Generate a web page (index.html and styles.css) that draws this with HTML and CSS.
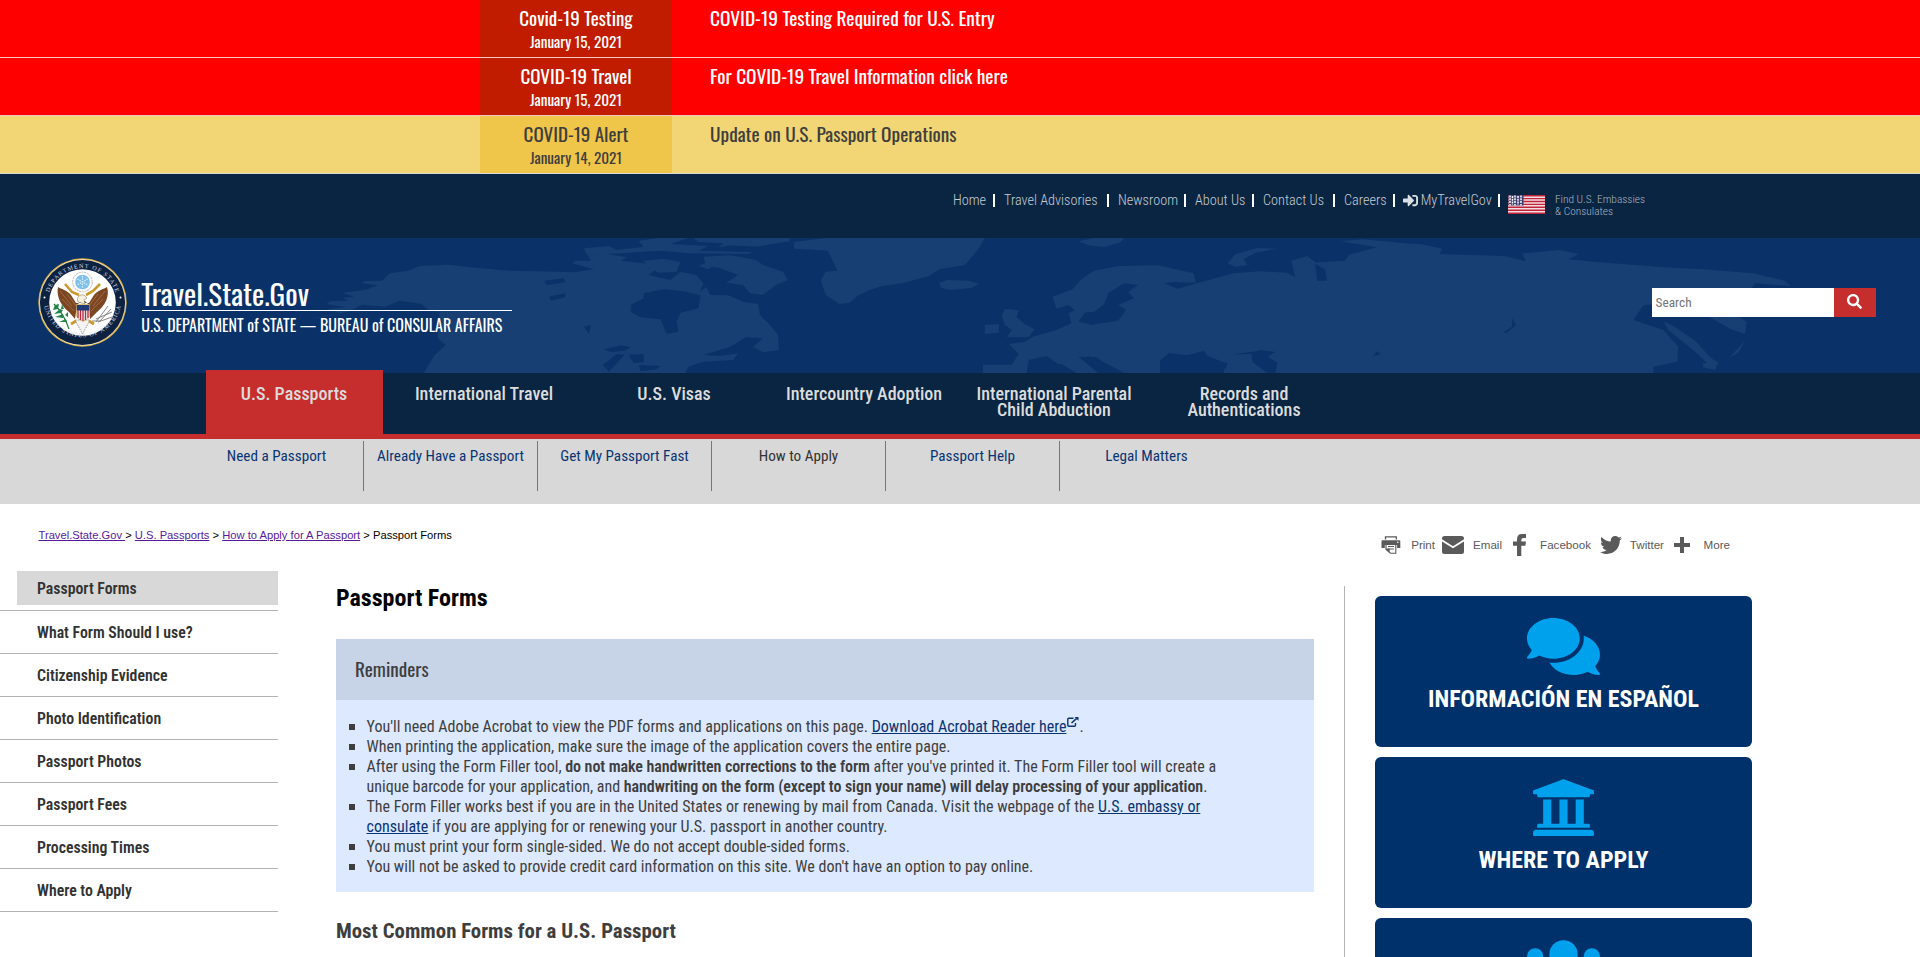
FILE: index.html
```html
<!DOCTYPE html>
<html lang="en">
<head>
<meta charset="utf-8">
<title>Passport Forms</title>
<link rel="stylesheet" href="styles.css">
</head>
<body>
<section class="alerts">
  <div class="alert alert-red">
    <div class="alert-tag"><div class="alert-name">Covid-19 Testing</div><div class="alert-date">January 15, 2021</div></div>
    <a class="alert-title">COVID-19 Testing Required for U.S. Entry</a>
  </div>
  <div class="alert alert-red">
    <div class="alert-tag"><div class="alert-name">COVID-19 Travel</div><div class="alert-date">January 15, 2021</div></div>
    <a class="alert-title">For COVID-19 Travel Information click here</a>
  </div>
  <div class="alert alert-yellow">
    <div class="alert-tag"><div class="alert-name">COVID-19 Alert</div><div class="alert-date">January 14, 2021</div></div>
    <a class="alert-title">Update on U.S. Passport Operations</a>
  </div>
</section>

<nav class="topbar">
  <div class="top-item"><a>Home</a></div>
  <div class="top-item"><a>Travel Advisories</a></div>
  <div class="top-item"><a>Newsroom</a></div>
  <div class="top-item"><a>About Us</a></div>
  <div class="top-item"><a>Contact Us</a></div>
  <div class="top-item"><a>Careers</a></div>
  <div class="top-item top-login">
    <svg class="login-icon" viewBox="0 0 512 512"><path d="M416 448h-84c-6.6 0-12-5.4-12-12v-40c0-6.600 5.400-12 12-12h84c17.700 0 32-14.300 32-32V160c0-17.700-14.300-32-32-32h-84c-6.600 0-12-5.400-12-12V76c0-6.600 5.400-12 12-12h84c53 0 96 43 96 96v192c0 53-43 96-96 96zm-47-209L201 71c-15-15-41-4.500-41 17v96H24c-13.300 0-24 10.700-24 24v96c0 13.300 10.700 24 24 24h136v96c0 21.500 26 32 41 17l168-168c9.300-9.400 9.300-24.600 0-34z"/></svg>
    <a>MyTravelGov</a>
  </div>
  <svg class="flag" viewBox="0 0 37 19">
    <rect width="37" height="19" fill="#f3dfe1"/>
    <path d="M0 .7h37M0 3.600h37M0 6.500h37M0 9.400h37M0 12.300h37M0 15.200h37M0 18.300h37" stroke="#c0243a" stroke-width="1.400"/>
    <rect x=".5" width="15" height="10.500" fill="#3c3b6e"/>
    <path d="M2 .5v10M4.500 1v9M7 .5v10M10 1v9M13 .5v10" stroke="#fff" stroke-width="1.500" stroke-dasharray="2 .8"/>
  </svg>
  <a class="embassies">Find U.S. Embassies<br>&amp; Consulates</a>
</nav>

<header class="header">
  <svg class="map" viewBox="-362 24 1930 405" preserveAspectRatio="none">
    <g class="land">
      <path d="M-58 272L-37 258-20 250-28 240-35 238-14 232-34 222-30 214-12 212-17 203-6 200-18 188 5 180 18 166 2 160 4 153 22 152 30 130 48 122 60 108 88 104 112 112 150 122 178 124 215 127 235 118 213 100 217 92 232 92 229 76 245 70 268 82 262 92 285 100 300 112 290 135 312 150 322 125 338 135 345 160 342 185 348 170 352 195 370 196 385 215 400 222 402 255 412 285 420 315 421 360 405 367 395 350 405 325 388 322 372 350 345 375 362 378 380 370 375 390 345 395 330 410 327 429H64L75 375 86 345 78 325 80 245 68 240 62 222 40 212 25 230 2 224-12 245-40 262Z"/>
      <path d="M228 75L225 55 250 48 258 60 285 50 280 32 300 24H330L312 42 350 48 340 62 395 66 390 72 330 70 300 62 262 70Z"/>
      <path d="M335 24H432V34L398 50 372 46 360 52 365 40 340 36ZM345 80L372 76 398 90 405 105 425 125 430 150 418 165 405 195 392 190 385 165 368 158 380 135 362 115 348 108Z"/>
      <path d="M285 92L305 86 322 96 318 125 300 128 290 112ZM352 92L362 95 350 118 340 108Z"/>
      <path d="M436 56V36L468 24H628L622 55 615 80 608 105 582 118 572 138 545 160 525 168 512 180 500 198 492 218 482 222 468 195 463 150 468 125 480 122 476 98 470 62Z"/>
      <path d="M582 158L590 150 612 152 622 162 614 174 594 180 584 174ZM580 98L590 94 598 100 590 110ZM722 34L738 24H768L765 36 748 52 732 46Z"/>
      <path d="M648 236L662 240 660 262 668 282 678 298 672 322 650 322 655 300 648 284 645 258ZM628 285L642 282 642 308 628 312Z"/>
      <path d="M872 100L880 72 902 54 922 56 900 68 888 88 892 106 880 110Z"/>
      <path d="M626 429V404H655L662 372 652 342 668 336 676 320 700 300 715 280 712 250 722 236 728 250 722 275 735 284 762 272 770 240 762 225 778 205 772 186 782 165 768 160 752 190 748 222 738 245 722 250 712 225 700 236 696 200 716 178 726 145 738 122 762 108 802 106 838 130 840 158 818 156 808 160 822 176 850 152 878 130 905 124 932 128 940 142 936 92 952 78 960 96 962 152 972 152 970 118 958 98 990 92 994 74 1022 52 985 34 1008 28 1050 40 1066 42 1088 56 1085 72 1150 78 1172 94 1168 70 1205 60 1225 72 1215 88 1240 95 1310 112 1350 118 1400 130 1432 152 1438 168 1402 160 1398 178 1340 210 1290 226 1280 270 1310 300 1325 350 1324 395 1300 410V429H950L905 362 880 372 868 400 870 429H805L820 378 810 365 790 375 785 400 798 429H760L740 382 722 380 742 429H715L690 378 672 390 670 429Z"/>
      <path d="M1310 272L1322 292 1342 332 1358 384 1366 400 1358 410 1340 360 1315 300ZM1352 254H1382L1394 275 1392 312 1378 298ZM1392 330L1386 366 1376 385 1388 345ZM1350 400L1365 396 1362 420 1350 412Z"/>
    </g>
    <g class="sea">
      <path d="M272 225L285 205 285 190 305 178 325 184 342 196 340 235 322 248 318 276 320 305 308 312 302 268 282 262 272 245Z"/>
      <path d="M245 358L262 346 272 352 266 362 252 366ZM258 372L266 374 250 425 244 405ZM270 374L285 372 285 396 275 400ZM280 405L302 408 298 418 282 424ZM185 152L205 145 206 156 188 166ZM190 200L206 190 206 202 192 212ZM225 290L232 285 230 312Z"/>
      <path d="M805 392L815 370 832 376 848 362 852 378 870 400 868 429H805ZM895 372L905 360 920 366 912 380 922 398 920 429H910L896 395ZM1158 265L1162 285 1152 310 1150 305 1158 290ZM1018 380L1022 364 1026 372ZM953 380H957V396H953ZM684 404L705 402 720 429H684ZM730 378L742 384 762 412 770 429H745Z"/>
    </g>
    <path class="land" d="M780 374L812 362 812 372 804 392V429H768L745 392 738 376ZM868 374L896 372 897 396 912 429H868L872 400 852 378ZM920 366H960V429H920L922 398 912 380Z"/>
  </svg>
  <svg class="seal" viewBox="0 0 89 89">
    <defs>
      <path id="ring-top" d="M11.200 54A34.600 34.600 0 1 1 77.800 54"/>
      <path id="ring-bottom" d="M5.200 40A39.300 39.300 0 1 0 83.800 40"/>
    </defs>
    <circle cx="44.500" cy="44.500" r="44.200" fill="#dcae3c"/>
    <circle cx="44.500" cy="44.500" r="43.200" fill="#f6ecd0"/>
    <circle cx="44.500" cy="44.500" r="42.600" fill="#0d2140"/>
    <circle cx="44.500" cy="44.500" r="33.300" fill="#fff"/>
    <text class="seal-text"><textPath href="#ring-top" startOffset="50%" text-anchor="middle" textLength="88">DEPARTMENT OF STATE</textPath></text>
    <text class="seal-text"><textPath href="#ring-bottom" startOffset="50%" text-anchor="middle" textLength="107">UNITED STATES OF AMERICA</textPath></text>
    <circle cx="6.500" cy="39.500" r="1" fill="#fff"/><circle cx="82.500" cy="39.500" r="1" fill="#fff"/>
    <circle cx="44.500" cy="24" r="9.800" fill="#fff" stroke="#b9b9b9" stroke-width="1" stroke-dasharray="2 .8"/>
    <circle cx="44.500" cy="24" r="7.300" fill="#7fc1ec"/>
    <path d="M44.500 18v12M39.300 21l10.400 6M49.700 21l-10.400 6" stroke="#d9effc" stroke-width="1.200" stroke-dasharray="1.500 1"/>
    <path d="M27 26L34 34 41 37 M62 26L55 33 48 37" fill="none" stroke="#c99a2c" stroke-width="2.600"/>
    <path d="M20 29C18 38 23 48 31 54L37 61 39 47 43 43H47L51 47 52 61 59 54C67 48 72 38 69 29C66 31 60 32 56 37L51 45H38L33 37C29 32 23 31 20 29Z" fill="#7b4623"/>
    <path d="M22 33L34 48M24 41L36 53M67 33L55 48M65 41L53 53M29 36L38 48M60 36L51 48" stroke="#a66d3d" stroke-width=".9"/>
    <path d="M40 44C38 39 42 36 46 37L49 40 46 42 47 46Z" fill="#f5f0df" stroke="#776849" stroke-width=".5"/>
    <path d="M37 62L44.500 76 52 62Z" fill="#f4f4f4" stroke="#9a9a9a" stroke-width="1" stroke-dasharray="1.500 1"/>
    <path d="M38.500 46.500H51.500V58Q50 62 45 63.500Q40 62 38.500 58Z" fill="#eee" stroke="#c99a2c" stroke-width=".6"/>
    <path d="M40 52v8M42.500 52v10M45 52v11M47.500 52v10M50 52v8" stroke="#b8283e" stroke-width="1.300"/>
    <path d="M38.800 47H51.300V52.500H38.800Z" fill="#1f3a76"/>
    <path d="M16 46Q26 56 31 71" stroke="#1f7a3e" stroke-width="1.200" fill="none"/>
    <path d="M17 47l-2 5 5-1 1-5ZM22 51l-6 5 7-1 2-3ZM25 56l-8 3 8 1ZM28 61l-7 3 8 0ZM23 51l1-5 2 5ZM27 57l3-3 0 5Z" fill="#24834a"/>
    <path d="M54 63L62 63 73 51M58 64L70 48M58 61L74 54M60 64L74 59" stroke="#777" stroke-width=".9" fill="none"/>
    <path d="M33 66l5-3M51 63l5 3" stroke="#c99a2c" stroke-width="3"/>
  </svg>
  <div class="brand">
    <div class="brand-name">Travel.State.Gov</div>
    <div class="brand-sub">U.S. DEPARTMENT of STATE — BUREAU of CONSULAR AFFAIRS</div>
  </div>
  <div class="search">
    <div class="search-field">Search</div>
    <div class="search-button"><svg class="search-icon" viewBox="0 0 512 512"><path d="M505 442.700L405.300 343c-4.500-4.500-10.600-7-17-7H372c27.600-35.300 44-79.700 44-128C416 93.100 322.900 0 208 0S0 93.100 0 208s93.100 208 208 208c48.300 0 92.700-16.400 128-44v16.300c0 6.400 2.500 12.500 7 17l99.700 99.700c9.400 9.400 24.600 9.400 33.900 0l28.300-28.300c9.400-9.400 9.400-24.600.1-34zM208 336c-70.700 0-128-57.200-128-128 0-70.700 57.200-128 128-128 70.700 0 128 57.200 128 128 0 70.700-57.200 128-128 128z"/></svg></div>
  </div>
</header>

<nav class="mainnav">
  <a class="tab tab-active">U.S. Passports</a>
  <a class="tab">International Travel</a>
  <a class="tab">U.S. Visas</a>
  <a class="tab">Intercountry Adoption</a>
  <a class="tab">International Parental<br>Child Abduction</a>
  <a class="tab">Records and<br>Authentications</a>
</nav>
<nav class="subnav">
  <a class="sub">Need a Passport</a>
  <a class="sub">Already Have a Passport</a>
  <a class="sub">Get My Passport Fast</a>
  <a class="sub sub-current">How to Apply</a>
  <a class="sub">Passport Help</a>
  <a class="sub">Legal Matters</a>
</nav>

<div class="crumb-row">
  <div class="crumbs"><a class="crumb">Travel.State.Gov </a>&gt; <a class="crumb">U.S. Passports</a> &gt; <a class="crumb">How to Apply for A Passport</a> &gt; Passport Forms</div>
  <div class="share">
    <div class="share-item share-print">
      <svg viewBox="0 0 20 18" width="20" height="18"><path d="M4.500 3.500V.8h10.800v2.700" fill="none" stroke="#5a5a5a" stroke-width="1.300"/><path d="M1.500 4.300h16.800q1 0 1 1v6.700h-3.200V9H3.800v3H.5V5.300q0-1 1-1z" fill="#5a5a5a"/><path d="M5 8v5.500l4.500 3.700h5.300V8M7 10.500h6M7 13h6" fill="none" stroke="#5a5a5a" stroke-width="1.100"/><path d="M4.500 12.500h4.200v4.500z" fill="#5a5a5a"/><circle cx="16.800" cy="6.200" r=".8" fill="#fff"/></svg>
      <span>Print</span></div>
    <div class="share-item share-email">
      <svg viewBox="0 0 22 18" width="22" height="18"><path d="M2.500 0h17Q22 0 22 2.500v13Q22 18 19.500 18h-17Q0 18 0 15.500v-13Q0 0 2.500 0z" fill="#5a5a5a"/><path d="M-.5 4L11 11.300 22.500 4" fill="none" stroke="#fff" stroke-width="1.800"/></svg>
      <span>Email</span></div>
    <div class="share-item share-facebook">
      <svg viewBox="0 0 13 22" width="13" height="22"><path d="M4 22V11.800H0V7.500h4V5.200Q4 0 9 0h4v4h-2.500Q8.300 4 8.300 6v1.500H13l-.6 4.300H8.300V22z" fill="#5a5a5a"/></svg>
      <span>Facebook</span></div>
    <div class="share-item share-twitter">
      <svg viewBox="0 48 512 416" width="22" height="18"><path fill="#5a5a5a" d="M459.370 151.716c.325 4.548.325 9.097.325 13.645 0 138.720-105.583 298.558-298.558 298.558-59.452 0-114.680-17.219-161.137-47.106 8.447.974 16.568 1.299 25.340 1.299 49.055 0 94.213-16.568 130.274-44.832-46.132-.975-84.792-31.188-98.112-72.772 6.498.974 12.995 1.624 19.818 1.624 9.421 0 18.843-1.300 27.614-3.573-48.081-9.747-84.143-51.980-84.143-102.985v-1.299c13.969 7.797 30.214 12.670 47.431 13.319-28.264-18.843-46.781-51.005-46.781-87.391 0-19.492 5.197-37.360 14.294-52.954 51.655 63.675 129.300 105.258 216.365 109.807-1.624-7.797-2.599-15.918-2.599-24.040 0-57.828 46.782-104.934 104.934-104.934 30.213 0 57.502 12.670 76.670 33.137 23.715-4.548 46.456-13.320 66.599-25.340-7.798 24.366-24.366 44.833-46.132 57.827 21.117-2.273 41.584-8.122 60.426-16.243-14.292 20.791-32.161 39.308-52.628 54.253z"/></svg>
      <span>Twitter</span></div>
    <div class="share-item share-more">
      <svg viewBox="0 0 16 16" width="16" height="16"><path d="M6 0h4v6h6v4h-6v6H6v-6H0V6h6z" fill="#5a5a5a"/></svg>
      <span>More</span></div>
  </div>
</div>

<div class="columns">
  <nav class="sidenav">
    <div class="side side-current"><a>Passport Forms</a></div>
    <div class="side"><a>What Form Should I use?</a></div>
    <div class="side"><a>Citizenship Evidence</a></div>
    <div class="side"><a>Photo Identification</a></div>
    <div class="side"><a>Passport Photos</a></div>
    <div class="side"><a>Passport Fees</a></div>
    <div class="side"><a>Processing Times</a></div>
    <div class="side"><a>Where to Apply</a></div>
  </nav>
  <main class="main">
    <h1 class="page-title">Passport Forms</h1>
    <div class="reminders-head">Reminders</div>
    <ul class="reminders">
      <li>You'll need Adobe Acrobat to view the PDF forms and applications on this page. <a class="link">Download Acrobat Reader here</a><svg class="ext" viewBox="0 0 12 10"><path d="M6.500 1.300H1.800q-1 0-1 1v6q0 1 1 1h5.700q1 0 1-1V6" fill="none" stroke="#0a3472" stroke-width="1.400"/><path d="M4.500 6L9.500 1.700" stroke="#0a3472" stroke-width="1.600"/><path d="M7.500 0h4v3.700z" fill="#0a3472"/></svg>.</li>
      <li>When printing the application, make sure the image of the application covers the entire page.</li>
      <li>After using the Form Filler tool, <b>do not make handwritten corrections to the form</b> after you've printed it. The Form Filler tool will create a unique barcode for your application, and <b>handwriting on the form (except to sign your name) will delay processing of your application</b>.</li>
      <li>The Form Filler works best if you are in the United States or renewing by mail from Canada. Visit the webpage of the <a class="link">U.S. embassy or consulate</a> if you are applying for or renewing your U.S. passport in another country.</li>
      <li>You must print your form single-sided. We do not accept double-sided forms.</li>
      <li>You will not be asked to provide credit card information on this site. We don't have an option to pay online.</li>
    </ul>
    <h2 class="section-title">Most Common Forms for a U.S. Passport</h2>
  </main>
  <aside class="aside">
    <a class="cta">
      <svg class="cta-icon" viewBox="0 0 576 512" width="73" height="65"><path d="M416 192c0-88.400-93.100-160-208-160S0 103.600 0 192c0 34.300 14.100 65.900 38 92-13.400 30.200-35.500 54.200-35.800 54.500-2.200 2.300-2.800 5.700-1.500 8.700S4.800 352 8 352c36.600 0 66.900-12.300 88.700-25 32.200 15.700 70.300 25 111.300 25 114.900 0 208-71.600 208-160zm122 220c23.900-26 38-57.700 38-92 0-66.900-53.500-124.200-129.300-148.100.9 6.600 1.300 13.300 1.300 20.100 0 105.900-107.700 192-240 192-10.800 0-21.300-.8-31.700-1.900C207.800 439.600 281.800 480 368 480c41 0 79.100-9.200 111.300-25 21.800 12.700 52.100 25 88.700 25 3.200 0 6.100-1.900 7.300-4.800 1.300-2.900.7-6.300-1.500-8.700-.3-.3-22.400-24.200-35.800-54.500z"/></svg>
      <span>INFORMACIÓN EN ESPAÑOL</span>
    </a>
    <a class="cta">
      <svg class="cta-icon" viewBox="0 0 512 512" width="65" height="65"><path d="M496 128v16a8 8 0 0 1-8 8h-24v12c0 6.627-5.373 12-12 12H60c-6.627 0-12-5.373-12-12v-12H24a8 8 0 0 1-8-8v-16a8 8 0 0 1 4.941-7.392l232-88a7.996 7.996 0 0 1 6.118 0l232 88A8 8 0 0 1 496 128zm-24 304H40c-13.255 0-24 10.745-24 24v16a8 8 0 0 0 8 8h464a8 8 0 0 0 8-8v-16c0-13.255-10.745-24-24-24zM96 192v192H60c-6.627 0-12 5.373-12 12v20h416v-20c0-6.627-5.373-12-12-12h-36V192h-64v192h-64V192h-64v192h-64V192H96z"/></svg>
      <span>WHERE TO APPLY</span>
    </a>
    <a class="cta">
      <svg class="cta-icon" viewBox="0 0 640 512" width="81" height="65"><circle cx="96" cy="160" r="64"/><circle cx="544" cy="160" r="64"/><circle cx="320" cy="144" r="112"/><path d="M128 480v-64q0-130 125-130h134q125 0 125 130v64zM0 352v-32q0-64 64-64h64q25 0 45 19-60 35-76 77zM640 352v-32q0-64-64-64h-64q-25 0-45 19 60 35 76 77z"/></svg>
    </a>
  </aside>
</div>
</body>
</html>
```
FILE: styles.css
```css
* { box-sizing: border-box; }
body {
  margin: 0;
  height: 957px;
  overflow: hidden;
  background: #fff;
  font-family: "Roboto Condensed", Roboto, sans-serif;
  color: #3e3e3e;
}
svg { display: block; flex: none; }

/* Alerts */
.alert { display: flex; height: 58px; padding-left: 480px; border-bottom: 1px solid #f0c8c0; font-family: Oswald, sans-serif; font-weight: 400; }
.alert-red { background: #f00; color: #fff; }
.alert-red .alert-tag { background: #c11b00; }
.alert-yellow { background: #f2d574; border-bottom-color: #d8dcd8; }
.alert-yellow .alert-tag { background: #efc54a; }
.alert-tag { width: 192px; text-align: center; }
.alert-name { font-size: 19px; line-height: 34px; }
.alert-date { font-size: 15.200px; line-height: 14px; }
.alert-title { margin-left: 38px; font-size: 19.350px; line-height: 35px; }

/* Utility links */
.topbar {
  display: grid;
  grid-template-columns: 41px 104px 67px 58px 71px 50px 95px 37px 120px;
  column-gap: 10px;
  height: 64px;
  padding: 17px 0 0 953.500px;
  background: #0a2542;
  color: #c5ccd4;
  font-weight: 300;
  font-size: 14.250px;
  line-height: 18px;
  white-space: nowrap;
}
.top-item { display: flex; justify-content: space-between; height: 18px; }
.top-item::after { content: ""; width: 1.500px; height: 13px; margin-top: 3px; background: #fff; }
.top-item a { margin-left: -0.500px; }
.top-login { margin-left: -2px; }
.top-login a { margin-left: -3px; }
.login-icon { width: 15px; height: 15px; margin-top: 2px; fill: #dcdfe3; }
.flag { width: 37px; height: 19px; margin: 4px 0 0 -1.500px; }
.embassies { margin-left: -1.500px; font-size: 11.400px; line-height: 12px; padding-top: 2px; color: #a9b4c0; }

/* Header */
.header { position: relative; display: flex; height: 135px; padding-left: 38px; background: #0a3268; }
.map { position: absolute; left: 0; top: 0; width: 100%; height: 100%; }
.land { fill: #173f73; }
.sea { fill: #0a3268; }
.seal { position: relative; width: 89px; height: 89px; margin-top: 20px; }
.seal-text { font: 6.200px "Liberation Serif", serif; fill: #d5dae2; }
.brand { position: relative; width: 370px; margin-left: 15px; padding-top: 37px; color: #fff; font-family: Oswald, sans-serif; font-weight: 400; white-space: nowrap; }
.brand-name { height: 36px; font-size: 29.200px; line-height: 36px; border-bottom: 1px solid #fff; text-indent: -0.700px; }
.brand-sub { font-size: 16px; line-height: 28px; text-indent: -0.700px; }
.search { position: relative; display: flex; height: 29px; margin: 50px 44px 0 auto; }
.search-field { width: 182px; padding-left: 3.500px; background: #fff; color: #757575; font-size: 13.333px; line-height: 29px; }
.search-button { width: 42px; padding: 6px 0 0 13px; background: #c62d2d; }
.search-icon { width: 15px; height: 15px; fill: #fff; }

/* Navigation */
.mainnav { display: flex; gap: 13px; height: 66px; padding-left: 206px; background: #0a2542; border-bottom: 5px solid #c62d2d; }
.tab { position: relative; width: 177px; height: 64px; margin-top: -3px; padding: 16px 1px 0 0; text-align: center; color: #dcdcdc; font-size: 18px; font-weight: 500; line-height: 16px; white-space: nowrap; }
.tab-active { background: #c62d2d; }
.subnav { display: flex; height: 65px; padding: 2px 0 0 190px; background: #d8d8d8; }
.sub { width: 174px; height: 50px; border-right: 1px solid #777; text-align: center; color: #0a3472; font-size: 15.200px; line-height: 30px; }
.sub:last-child { padding-right: 1px; border-right: 0; }
.sub-current { color: #323232; }

/* Breadcrumbs and sharing */
.crumb-row { display: flex; justify-content: space-between; height: 67px; padding: 21px 190px 0 38.500px; font-family: "Liberation Sans", Arial, sans-serif; color: #000; }
.crumbs { font-size: 11.200px; line-height: 20px; }
.crumb { color: #5a1a9e; text-decoration: underline; white-space: pre; }
.share { display: flex; height: 24px; margin-top: 8px; font-size: 11.600px; color: #5a5a5a; }
.share-item { display: flex; align-items: center; justify-content: space-between; }
.share-item span { margin-bottom: 2px; }
.share-print { width: 54px; margin-right: 7px; }
.share-email { width: 60px; margin-right: 11px; }
.share-facebook { width: 78px; margin-right: 9px; }
.share-twitter { width: 64px; margin-right: 10px; }
.share-more { width: 56px; }

/* Page body */
.columns { display: flex; height: 386px; }
.sidenav { width: 278px; }
.side { height: 43px; padding-left: 37px; border-bottom: 1px solid #b3b3b3; color: #323232; font-size: 15.800px; font-weight: 600; line-height: 44px; }
.side-current { height: 40px; padding-left: 17px; }
.side-current a { display: block; height: 34px; padding-left: 20px; line-height: 36px; background: #d8d8d8; }
.main { width: 978px; margin-left: 58px; }
.page-title { margin: 0 0 14px; font-size: 24px; line-height: 54px; font-weight: 700; color: #000; }
.reminders-head { height: 61px; padding-left: 19px; background: #c7d3e7; font-family: Oswald, sans-serif; font-size: 19.200px; font-weight: 400; line-height: 60px; }
.reminders { margin: 0; padding: 17px 80px 15px 30.500px; background: #dde9ff; font-size: 16px; line-height: 20px; list-style: none; }
.reminders li { position: relative; }
.reminders li::before { content: ""; position: absolute; left: -17.500px; top: 7px; width: 6px; height: 6px; background: #3e3e3e; }
.reminders b { font-weight: 600; letter-spacing: -0.080px; }
.link { color: #0a3472; text-decoration: underline; }
.ext { display: inline-block; width: 12px; height: 10px; vertical-align: 5px; margin-left: 1px; }
.section-title { margin: 19px 0 0; font-size: 20.800px; line-height: 40px; font-weight: 700; }

.aside { display: flex; flex-direction: column; gap: 10px; height: 371px; margin: 15px 0 0 30px; padding: 10px 0 0 30px; border-left: 1px solid #b3b3b3; overflow: hidden; }
.cta { display: flex; flex: none; flex-direction: column; align-items: center; width: 377px; height: 151px; padding-top: 18px; border-radius: 6px; background: #00316a; color: #fff; font-size: 24px; font-weight: 700; line-height: 40px; }
.cta-icon { fill: #00a1ec; }
```
